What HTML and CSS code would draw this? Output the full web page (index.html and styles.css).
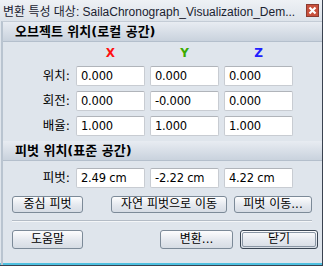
FILE: index.html
```html
<!DOCTYPE html>
<html lang="ko">
<head>
<meta charset="utf-8">
<link rel="stylesheet" href="styles.css">
</head>
<body>
<div class="window">
  <div class="titlebar">
    <span class="title">변환 특성 대상: SailaChronograph_Visualization_Dem...</span>
    <span class="close"><svg width="13" height="13" viewBox="0 0 13 13"><rect x="0.5" y="0.5" width="12" height="12" fill="#c8503c" stroke="#8a3a30"/><path d="M3.5 3.5 L9.5 9.5 M9.5 3.5 L3.5 9.5" stroke="#fff" stroke-width="2.2"/></svg></span>
  </div>
  <div class="body">
    <div class="section-head">오브젝트 위치(로컬 공간)</div>
    <div class="grid">
      <span></span><span class="axis x">X</span><span class="axis y">Y</span><span class="axis z">Z</span>
      <span class="lbl">위치:</span><span class="field">0.000</span><span class="field">0.000</span><span class="field">0.000</span>
      <span class="lbl">회전:</span><span class="field">0.000</span><span class="field">-0.000</span><span class="field">0.000</span>
      <span class="lbl">배율:</span><span class="field">1.000</span><span class="field">1.000</span><span class="field">1.000</span>
    </div>
    <div class="section-head second">피벗 위치(표준 공간)</div>
    <div class="grid pivot">
      <span class="lbl">피벗:</span><span class="field">2.49 cm</span><span class="field">-2.22 cm</span><span class="field">4.22 cm</span>
    </div>
    <div class="btnrow">
      <span class="btn b1">중심 피벗</span>
      <span class="btn b2">자연 피벗으로 이동</span>
      <span class="btn b3">피벗 이동...</span>
    </div>
    <div class="sep"></div>
    <div class="btnrow bottom">
      <span class="btn b1">도움말</span>
      <span class="spacer"></span>
      <span class="btn b4">변환...</span>
      <span class="btn b3 default"><span>닫기</span></span>
    </div>
  </div>
</div>
</body>
</html>
```
FILE: styles.css
```css
html, body { margin: 0; padding: 0; background: #ffffff; }
body { font-family: "DejaVu Sans", "Noto Sans CJK KR", sans-serif; font-size: 12px; color: #000; }
.window {
  width: 323px; height: 266px; box-sizing: border-box;
  background: #dfe5ec;
  border-right: 1px solid #3a4250;
  border-bottom: 1px solid #3a4250;
  box-shadow: inset 0 -2px 0 #4fc0e0;
  display: flex; flex-direction: column;
}
.titlebar {
  height: 21px; flex: none; display: flex; align-items: center;
  padding: 0 3px 0 3px;
  background: linear-gradient(#eef1f5, #dde3ea);
}
.title {
  font-family: "Liberation Sans", "Noto Sans CJK KR", sans-serif;
  font-size: 12px; color: #1a2230; white-space: nowrap;
  flex: 1; min-width: 0;
}
.close { display: flex; margin-left: 2px; flex: none; }
.body {
  flex: 1; border-left: 2px solid #b9c4d0; margin-left: 1px;
  border-top: 1px solid #c4ccd6;
  display: flex; flex-direction: column;
}
.section-head {
  height: 19px; line-height: 19px; font-weight: bold; font-size: 13px;
  padding-left: 12px; color: #000;
  background: linear-gradient(#e8ecf2, #c9d2dd);
  border-bottom: 1px solid #b4bfcc;
}
.section-head.second { margin-top: 5px; }
.grid {
  display: grid; grid-template-columns: 68px 69px 69px 69px;
  column-gap: 5px; row-gap: 5px;
  grid-template-rows: 15px 20px 20px 20px;
  padding-top: 4px;
}
.axis { text-align: center; font-weight: bold; font-size: 12px; line-height: 15px; }
.axis.x { color: #ff1010; }
.axis.y { color: #3aaa00; }
.axis.z { color: #2020ff; }
.lbl { text-align: right; line-height: 20px; font-size: 12.5px; padding-right: 1px; }
.field {
  background: #fff; border: 1px solid #c8ccd2; border-top-color: #b0b4ba; border-radius: 2px;
  box-sizing: border-box; height: 20px; line-height: 18px; padding-left: 4px;
  font-family: "DejaVu Sans", sans-serif; font-size: 11.5px; letter-spacing: -0.2px;
}
.grid.pivot { grid-template-rows: 20px; padding-top: 7px; }
.btnrow { display: flex; padding: 8px 0 0 9px; gap: 0; }
.btn {
  height: 17px; box-sizing: border-box; line-height: 15px; text-align: center;
  border: 1px solid #7c8a98; border-radius: 3px;
  background: linear-gradient(#fdfdfe, #e4e8ee 55%, #d6dce4);
  font-size: 12px; color: #000;
}
.b1 { width: 71px; }
.b2 { width: 116px; margin-left: 28px; }
.b3 { width: 78px; margin-left: 7px; }
.b4 { width: 73px; }
.sep { height: 0; border-top: 1px solid #b4bcc6; border-bottom: 1px solid #f4f6f8; margin: 7px 10px 0 9px; }
.btnrow.bottom { padding-top: 8px; }
.btnrow.bottom .btn { height: 19px; line-height: 17px; }
.spacer { flex: 1; max-width: 77px; }
.default { border: 1px solid #3a4654; padding: 1px; }
.default span { display: block; border: 1px solid #8a96a4; border-radius: 2px; height: 13px; line-height: 13px; }
```
